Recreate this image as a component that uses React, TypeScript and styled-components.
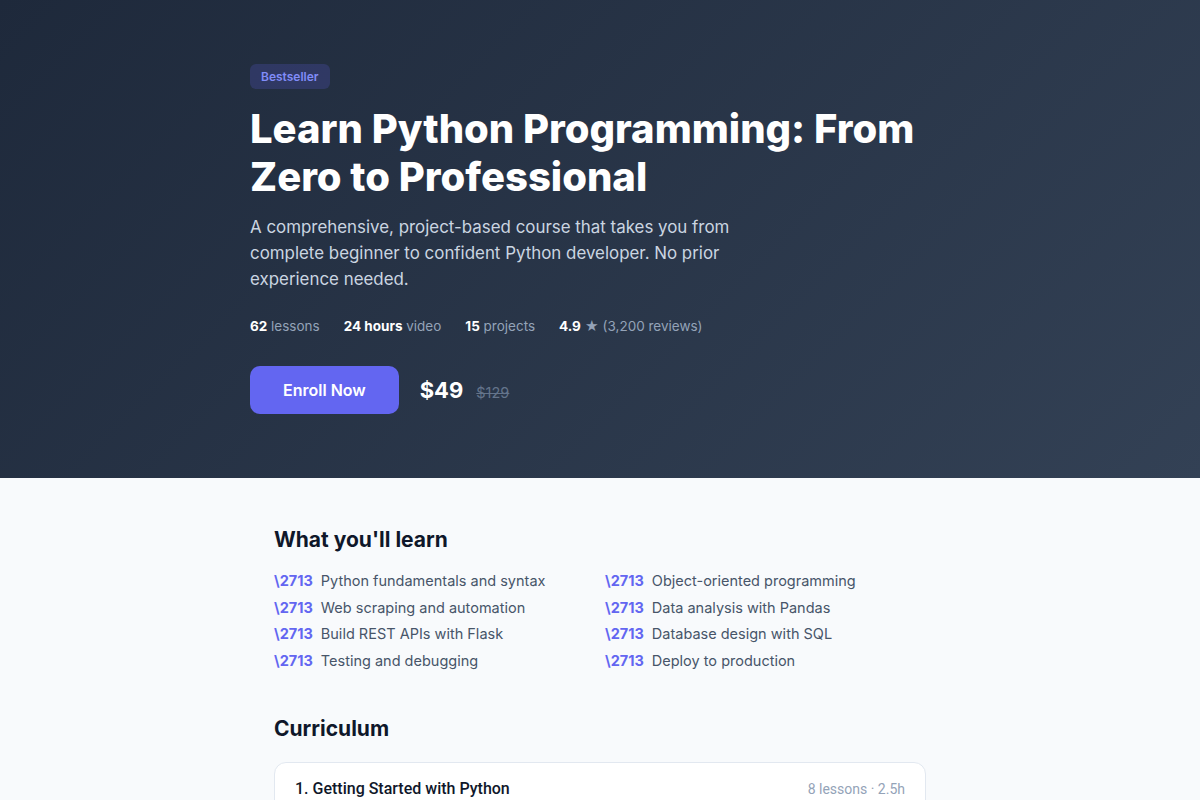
import React from 'react';
import styled, { createGlobalStyle } from 'styled-components';

const GlobalStyle = createGlobalStyle`
  * { box-sizing: border-box; }
  body {
    margin: 0;
    font-family: Inter, "Noto Sans", sans-serif;
    background: #f8fafc;
    color: #0f172a;
  }
`;

const Hero = styled.header`
  background: linear-gradient(135deg, #1e293b 0%, #334155 100%);
  padding: 64px 24px;
`;

const HeroInner = styled.div`
  max-width: 700px;
  margin: 0 auto;
`;

const Badge = styled.span`
  display: inline-block;
  background: rgba(99, 102, 241, 0.2);
  color: #818cf8;
  font-size: 12px;
  font-weight: 600;
  padding: 5px 11px;
  border-radius: 6px;
  margin-bottom: 16px;
`;

const Title = styled.h1`
  margin: 0 0 13px;
  color: #ffffff;
  font-size: 40px;
  font-weight: 800;
  line-height: 1.2;
`;

const Description = styled.p`
  margin: 0 0 24px;
  max-width: 520px;
  color: #cbd5e1;
  font-size: 16.9px;
  line-height: 26px;
`;

const Stats = styled.div`
  display: flex;
  gap: 24px;
  font-size: 13.5px;
  line-height: 20px;
  color: #94a3b8;
  margin-bottom: 30px;
`;

const Stat = styled.span`
  strong {
    color: #ffffff;
    font-weight: 700;
  }
`;

const Actions = styled.div`
  display: flex;
  align-items: center;
  gap: 21px;
`;

const EnrollButton = styled.button`
  font-family: Inter, sans-serif;
  font-size: 16px;
  font-weight: 600;
  color: #ffffff;
  background: #6366f1;
  border: none;
  border-radius: 10px;
  padding: 14px 33px;
  cursor: pointer;
`;

const Price = styled.div`
  display: flex;
  align-items: baseline;
  gap: 13px;
`;

const NewPrice = styled.span`
  color: #ffffff;
  font-size: 22px;
  font-weight: 700;
`;

const OldPrice = styled.span`
  color: #64748b;
  font-size: 14.5px;
  text-decoration: line-through;
`;

const Main = styled.main`
  max-width: 700px;
  margin: 0 auto;
  padding: 48px 24px;
`;

const SectionTitle = styled.h2<{ $gap: number }>`
  margin: 0 0 ${({ $gap }) => $gap}px;
  font-size: 21px;
  font-weight: 700;
  line-height: 28px;
  color: #0f172a;
`;

const Section = styled.section`
  margin-bottom: 43px;
`;

const LearnGrid = styled.ul`
  list-style: none;
  margin: 0;
  padding: 0;
  display: grid;
  grid-template-columns: 1fr 1fr;
  gap: 4px 10px;
`;

const LearnItem = styled.li`
  display: flex;
  gap: 8px;
  font-size: 14.5px;
  line-height: 22.5px;
  color: #475569;
`;

const Check = styled.span`
  color: #6366f1;
  font-weight: 700;
`;

const ModuleList = styled.div`
  display: flex;
  flex-direction: column;
  gap: 12px;
`;

const ModuleCard = styled.div`
  background: #ffffff;
  border: 1px solid #e2e8f0;
  border-radius: 12px;
  overflow: hidden;
`;

const ModuleHeader = styled.div`
  display: flex;
  justify-content: space-between;
  align-items: center;
  padding: 16px 20px;
  font-family: Roboto, sans-serif;
`;

const ModuleName = styled.span`
  font-size: 16px;
  font-weight: 500;
  color: #0f172a;
`;

const ModuleMeta = styled.span`
  font-size: 14px;
  color: #94a3b8;
`;

const learn = [
  'Python fundamentals and syntax',
  'Object-oriented programming',
  'Web scraping and automation',
  'Data analysis with Pandas',
  'Build REST APIs with Flask',
  'Database design with SQL',
  'Testing and debugging',
  'Deploy to production',
];

const modules = [
  { name: '1. Getting Started with Python', meta: '8 lessons · 2.5h' },
  { name: '2. Data Types and Control Flow', meta: '10 lessons · 3h' },
];

export default function App() {
  return (
    <>
      <GlobalStyle />
      <Hero>
        <HeroInner>
          <Badge>Bestseller</Badge>
          <Title>Learn Python Programming: From Zero to Professional</Title>
          <Description>
            A comprehensive, project-based course that takes you from complete beginner to
            confident Python developer. No prior experience needed.
          </Description>
          <Stats>
            <Stat><strong>62</strong> lessons</Stat>
            <Stat><strong>24 hours</strong> video</Stat>
            <Stat><strong>15</strong> projects</Stat>
            <Stat><strong>4.9</strong> ★ (3,200 reviews)</Stat>
          </Stats>
          <Actions>
            <EnrollButton>Enroll Now</EnrollButton>
            <Price>
              <NewPrice>$49</NewPrice>
              <OldPrice>$129</OldPrice>
            </Price>
          </Actions>
        </HeroInner>
      </Hero>
      <Main>
        <Section>
          <SectionTitle $gap={16}>What you'll learn</SectionTitle>
          <LearnGrid>
            {learn.map((item) => (
              <LearnItem key={item}>
                <Check>{'\\2713'}</Check>
                {item}
              </LearnItem>
            ))}
          </LearnGrid>
        </Section>
        <Section>
          <SectionTitle $gap={19}>Curriculum</SectionTitle>
          <ModuleList>
            {modules.map((m) => (
              <ModuleCard key={m.name}>
                <ModuleHeader>
                  <ModuleName>{m.name}</ModuleName>
                  <ModuleMeta>{m.meta}</ModuleMeta>
                </ModuleHeader>
              </ModuleCard>
            ))}
          </ModuleList>
        </Section>
      </Main>
    </>
  );
}
